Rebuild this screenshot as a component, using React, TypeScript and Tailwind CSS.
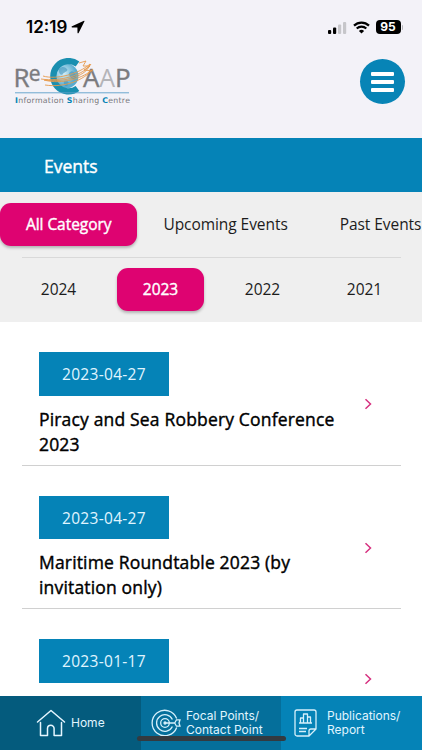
import { useState } from "react";

interface EventItem {
  date: string;
  title: string;
}

const categories = ["All Category", "Upcoming Events", "Past Events"];
const years = ["2024", "2023", "2022", "2021"];

const events: EventItem[] = [
  { date: "2023-04-27", title: "Piracy and Sea Robbery Conference 2023" },
  { date: "2023-04-27", title: "Maritime Roundtable 2023 (by invitation only)" },
  { date: "2023-01-17", title: "\u00a0" },
];

const StatusBar = () => (
  <div className="flex h-[54px] items-center justify-between pl-[26px] pr-[19px]">
    <div className="flex items-center gap-[4px]">
      <span className="font-['Inter',sans-serif] text-[17px] font-semibold leading-5">
        12:19
      </span>
      <svg width="14" height="14" viewBox="0 0 14 14">
        <path d="M13 .8 1 6.3c-.7.4-.4 1.2.1 1.2l5.3.1.1 5.2c0 .6.8.8 1.1.2L13.5 1.3c.1-.4-.1-.6-.5-.5Z" />
      </svg>
    </div>
    <div className="flex items-center">
      <svg width="19" height="13" viewBox="0 0 19 13">
        <rect x="0" y="9" width="3.2" height="4" rx="1" />
        <rect x="5" y="6.6" width="3.2" height="6.4" rx="1" />
        <rect x="10" y="3.6" width="3.2" height="9.4" rx="1" fill="#c6c6ca" />
        <rect x="15" y="1" width="3.2" height="12" rx="1" fill="#c6c6ca" />
      </svg>
      <svg className="ml-[6px]" width="17" height="13" viewBox="0 0 17 13" fill="none" stroke="#000">
        <path d="M1 4.6a10.7 10.7 0 0 1 15 0" strokeWidth="2.2" />
        <path d="M3.7 7.6a6.9 6.9 0 0 1 9.6 0" strokeWidth="2.1" />
        <path d="M8.5 12.6 5.9 10a3.7 3.7 0 0 1 5.2 0Z" fill="#000" stroke="none" />
      </svg>
      <span className="ml-[6px] flex h-[14px] w-[25px] items-center justify-center rounded-[4px] bg-black font-['Inter',sans-serif] text-[12px] font-bold text-white">
        95
      </span>
      <span className="ml-[1px] h-[5px] w-[1.5px] rounded-r bg-[#b5b5b9]" />
    </div>
  </div>
);

const Logo = () => (
  <svg width="118" height="50" viewBox="0 0 118 50" fontFamily="Open Sans, sans-serif">
    <defs>
      <radialGradient id="globe" cx="40%" cy="40%">
        <stop offset="0" stopColor="#d7f0f8" />
        <stop offset="1" stopColor="#58acd0" />
      </radialGradient>
    </defs>
    <g fill="#7b7b7f" stroke="#7b7b7f" strokeWidth=".4">
      <text x="-.5" y="28.5" fontSize="26">R</text>
      <text x="14.8" y="22.5" fontSize="21">e</text>
      <text x="69" y="28.5" fontSize="26">A</text>
      <text x="101" y="28.5" fontSize="26">P</text>
    </g>
    <text x="85.3" y="28.5" fontSize="25" fill="#b4b4b8">A</text>
    <circle cx="52" cy="18" r="12.5" fill="url(#globe)" />
    <path d="M45 11c3-3 6-2 8 0s-3 3-4 5-5 0-4-5Zm11 3c3-2 5 1 6 4s-3 5-5 2-3-4-1-6Zm-6 9c3-1 6 1 4 4s-5 0-4-4Z" fill="#3d93bd" opacity=".6" />
    <path d="M63.5 6A15.2 15.2 0 1 0 63.5 30.5" fill="none" stroke="#1a8fb0" strokeWidth="6.2" />
    <g fill="none" stroke="#e69a4c" strokeWidth=".9">
      <path d="M29 18c13 4 36-2 47-12-2 11-24 19-46 16 18 5 40-2 49-11-9 11-28 19-48 16" />
      <path d="M27 21c19 3 43-4 50-15M65 5l7-2-3 5 7 0-6 4 9 1" />
    </g>
    <path d="M1 34.8h114" stroke="#5b9fc8" strokeWidth=".9" />
    <text x="1" y="45.3" fontSize="7.8" fill="#77777b" textLength="115" fontFamily="DejaVu Sans, sans-serif">
      <tspan fill="#0784b6" fontWeight="700">I</tspan>nformation <tspan fill="#0784b6" fontWeight="700">S</tspan>haring{" "}
      <tspan fill="#0784b6" fontWeight="700">C</tspan>entre
    </text>
  </svg>
);

const HomeIcon = () => (
  <svg width="30" height="28" viewBox="0 0 30 28" fill="none" stroke="#e5f6ff" strokeWidth="1.5" strokeLinejoin="round" strokeLinecap="round">
    <path d="M1.5 13 15 1.5 28.5 13M4.5 13.5v13h7v-7a3.3 3.3 0 0 1 6.6 0v7h7.4v-13" />
  </svg>
);

const TargetIcon = () => (
  <svg width="31" height="28" viewBox="0 0 31 28" fill="none" stroke="#d6f0fb" strokeWidth="1.3">
    <path d="M25.7 9.5A12.7 12.7 0 1 0 25.7 18.5" />
    <path d="M21.4 10.5a8.3 8.3 0 1 0 0 7" />
    <circle cx="14" cy="14" r="4.3" />
    <circle cx="14" cy="14" r="1" fill="#d6f0fb" />
    <path d="M14 14h10m5-3.2h-3.5L23.7 14l1.8 3.2H29L28 14Z" />
  </svg>
);

const ReportIcon = () => (
  <svg width="23" height="28" viewBox="0 0 23 28" fill="none" stroke="#d6f0fb" strokeWidth="1.3" strokeLinejoin="round">
    <path d="M3 1h17a2 2 0 0 1 2 2v17l-7 7H3a2 2 0 0 1-2-2V3a2 2 0 0 1 2-2ZM15 27v-5a2 2 0 0 1 2-2h5" />
    <path d="M6.5 14V9h3v5m0 0V5h4v9m0 0V8h3v6M5 14h13M5 19.5h8M5 22.5h7" />
  </svg>
);

const App = () => {
  const [category, setCategory] = useState("All Category");
  const [year, setYear] = useState("2023");

  return (
    <div className="flex h-[750px] w-full flex-col overflow-hidden bg-white font-['Open_Sans',sans-serif] text-black">
      <header className="h-[138px] shrink-0 bg-[#f3f2f8]">
        <StatusBar />
        <div className="flex items-start justify-between pl-[14px] pr-[17px]">
          <div className="pt-[4px]">
            <Logo />
          </div>
          <button className="mt-[5px] flex h-[45px] w-[45px] flex-col items-center justify-center gap-[4px] rounded-full bg-[#0784b6]">
            <span className="h-[4px] w-[23px] rounded-[1px] bg-white" />
            <span className="h-[4px] w-[23px] rounded-[1px] bg-white" />
            <span className="h-[4px] w-[23px] rounded-[1px] bg-white" />
          </button>
        </div>
      </header>

      <div className="flex h-[54px] shrink-0 items-center bg-[#0583b7] pl-[44px] pt-[2px] text-[17.5px] text-white [-webkit-text-stroke:0.4px]">
        Events
      </div>

      <div className="h-[130px] shrink-0 overflow-hidden bg-[#efefef] pt-[11px] text-[15.5px] text-[#1c1c1c]">
        <div className="flex whitespace-nowrap">
          {categories.map((item) => (
            <button
              key={item}
              onClick={() => setCategory(item)}
              className={`h-[43px] shrink-0 rounded-[11px] pl-[26px] tracking-[-0.06px] last:pr-0 ${
                item === category
                  ? "bg-[#de0371] pr-[26px] text-white shadow-[0_2px_3px_rgba(0,0,0,0.25)] [-webkit-text-stroke:0.4px]"
                  : "pr-[26px]"
              }`}
            >
              {item}
            </button>
          ))}
        </div>
        <div className="ml-[22px] mr-[21px] mt-[11px] h-px bg-[#d9d9d9]" />
        <div className="mt-[10px] flex gap-[15px] pl-[15px]">
          {years.map((item) => (
            <button
              key={item}
              onClick={() => setYear(item)}
              className={`h-[43px] w-[87px] shrink-0 rounded-[11px] ${
                item === year
                  ? "bg-[#de0371] text-white shadow-[0_2px_3px_rgba(0,0,0,0.25)] [-webkit-text-stroke:0.4px]"
                  : ""
              }`}
            >
              {item}
            </button>
          ))}
        </div>
      </div>

      <main className="min-h-0 flex-1 overflow-hidden pl-[22px] pr-[21px]">
        {events.map((event, index) => (
          <div
            key={index}
            className="flex items-center justify-between border-b border-[#d0d0d0] pb-[8px] pl-[17px] pr-[29px] pt-[30px]"
          >
            <div className="w-[310px]">
              <div className="flex h-[43.5px] w-[130px] items-center justify-center bg-[#0583b7] pt-[2px] text-[15.5px] tracking-[0.3px] text-[#e0f5ff]">
                {event.date}
              </div>
              <div className="mt-[11px] text-[17.5px] leading-[25px] tracking-[0.17px] [-webkit-text-stroke:0.4px]">
                {event.title}
              </div>
            </div>
            <svg width="8" height="12" viewBox="0 0 8 12" fill="none" stroke="#d6307f" strokeWidth="1.5">
              <path d="m1.5 1.2 5 4.8-5 4.8" />
            </svg>
          </div>
        ))}
      </main>

      <nav className="relative flex h-[54px] shrink-0 font-['Inter',sans-serif] text-[12px] leading-[14px] text-[#e0f5ff]">
        <a className="flex w-[141px] items-center gap-[5px] bg-[#045b7d] pl-[36px]">
          <HomeIcon />
          <span>Home</span>
        </a>
        <a className="flex w-[140px] items-center gap-[4px] bg-[#056f9b] pl-[10px]">
          <TargetIcon />
          <span className="whitespace-nowrap">
            Focal Points/
            <br />
            Contact Point
          </span>
        </a>
        <a className="flex flex-1 items-center gap-[10px] bg-[#0583b7] pl-[13px]">
          <ReportIcon />
          <span>
            Publications/
            <br />
            Report
          </span>
        </a>
        <span className="absolute bottom-[9px] left-[137px] h-[5px] w-[149px] rounded-full bg-[#333a40]" />
      </nav>
    </div>
  );
};

export default App;
